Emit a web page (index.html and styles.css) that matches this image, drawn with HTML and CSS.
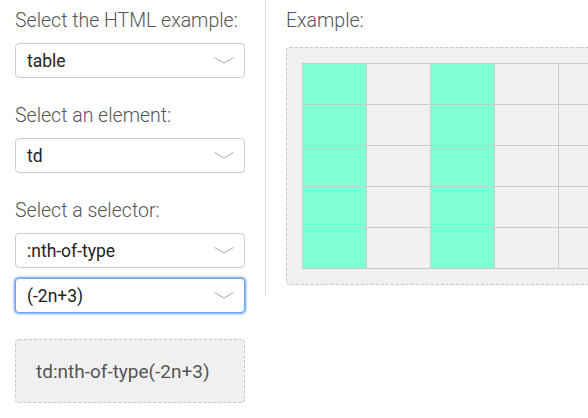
FILE: index.html
```html
<!DOCTYPE html>
<html>
<head>
<meta charset="utf-8">
<link rel="stylesheet" href="styles.css">
</head>
<body>
<div class="page">
  <div class="controls">
    <div class="label">Select the HTML example:</div>
    <div class="select gap-after">
      <span>table</span>
      <svg class="chev" width="20" height="7" viewBox="0 0 20 7"><polyline points="0.5,0.5 10,6 19.5,0.5"/></svg>
    </div>
    <div class="label">Select an element:</div>
    <div class="select gap-after">
      <span>td</span>
      <svg class="chev" width="20" height="7" viewBox="0 0 20 7"><polyline points="0.5,0.5 10,6 19.5,0.5"/></svg>
    </div>
    <div class="label">Select a selector:</div>
    <div class="select">
      <span>:nth-of-type</span>
      <svg class="chev" width="20" height="7" viewBox="0 0 20 7"><polyline points="0.5,0.5 10,6 19.5,0.5"/></svg>
    </div>
    <div class="select focused gap-after">
      <span>(-2n+3)</span>
      <svg class="chev" width="20" height="7" viewBox="0 0 20 7"><polyline points="0.5,0.5 10,6 19.5,0.5"/></svg>
    </div>
    <div class="result">td:nth-of-type(-2n+3)</div>
  </div>
  <div class="example">
    <div class="label ex-label">Example:</div>
    <div class="ex-box">
      <table class="grid">
        <tr><td class="hit"></td><td></td><td class="hit"></td><td></td><td></td><td></td></tr>
        <tr><td class="hit"></td><td></td><td class="hit"></td><td></td><td></td><td></td></tr>
        <tr><td class="hit"></td><td></td><td class="hit"></td><td></td><td></td><td></td></tr>
        <tr><td class="hit"></td><td></td><td class="hit"></td><td></td><td></td><td></td></tr>
        <tr><td class="hit"></td><td></td><td class="hit"></td><td></td><td></td><td></td></tr>
      </table>
    </div>
  </div>
</div>
</body>
</html>
```
FILE: styles.css
```css
html, body {
  margin: 0;
  padding: 0;
  overflow: hidden;
  background: #fff;
  font-family: Roboto, "Liberation Sans", Arial, sans-serif;
}
.page {
  display: flex;
  align-items: flex-start;
  padding-left: 15px;
}
.controls {
  width: 230px;
  flex: none;
  padding-top: 9px;
  display: flex;
  flex-direction: column;
}
.label {
  font-size: 19.5px;
  line-height: 24px;
  font-weight: 300;
  color: #555;
  margin-bottom: 10px;
  white-space: nowrap;
}
.select {
  box-sizing: border-box;
  height: 35px;
  border: 1px solid #ccc;
  border-radius: 4px;
  display: flex;
  align-items: center;
  justify-content: space-between;
  padding: 0 10px 0 11px;
  font-size: 17.5px;
  font-weight: 400;
  color: #222;
  margin-bottom: 10px;
  background: #fff;
}
.select.gap-after {
  margin-bottom: 26px;
}
.chev {
  display: block;
}
.chev polyline {
  fill: none;
  stroke: #aaa;
  stroke-width: 1;
}
.select.focused {
  border: 1px solid #6fa6ec;
  box-shadow: 0 0 0 1px #8db9f2, 0 0 2px 2px rgba(130, 175, 240, 0.45);
}
.result {
  box-sizing: border-box;
  height: 64px;
  border: 1px dashed #c8c8c8;
  border-radius: 4px;
  background: #f0f0f0;
  display: flex;
  align-items: center;
  padding-left: 20px;
  font-size: 19px;
  color: #555;
}
.example {
  flex: 1;
  margin-left: 20px;
  border-left: 1px solid #ddd;
  padding: 9px 0 10px 20px;
  min-width: 0;
  overflow: hidden;
}
.ex-label {
  margin-bottom: 14px;
}
.ex-box {
  width: max-content;
  border: 1px dashed #c8c8c8;
  border-radius: 4px;
  background: #f0f0f0;
  padding: 15px;
}
.grid {
  border-collapse: collapse;
  table-layout: fixed;
}
.grid td {
  width: 63px;
  min-width: 63px;
  height: 40px;
  padding: 0;
  border: 1px solid #ccc;
}
.grid td.hit {
  background: #7fffd4;
}
```
